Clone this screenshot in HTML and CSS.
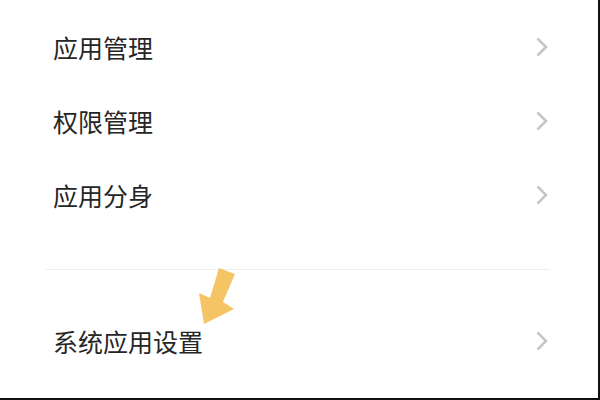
FILE: index.html
```html
<!DOCTYPE html>
<html lang="zh">
<head>
    <meta charset="UTF-8">
    <meta name="viewport" content="width=device-width, initial-scale=1.0">
    <title>应用设置</title>
    <link rel="stylesheet" href="styles.css">
</head>
<body>
    <div class="screen">
        <ul class="menu">
            <li class="menu-item">
                <span>应用管理</span>
                <svg class="chevron" viewBox="0 0 14 22"><path d="M2.5 2.5 L11 11 L2.5 19.5"/></svg>
            </li>
            <li class="menu-item">
                <span>权限管理</span>
                <svg class="chevron" viewBox="0 0 14 22"><path d="M2.5 2.5 L11 11 L2.5 19.5"/></svg>
            </li>
            <li class="menu-item">
                <span>应用分身</span>
                <svg class="chevron" viewBox="0 0 14 22"><path d="M2.5 2.5 L11 11 L2.5 19.5"/></svg>
            </li>
        </ul>

        <div class="divider"></div>

        <ul class="menu menu-system">
            <li class="menu-item">
                <span>系统应用设置</span>
                <svg class="chevron" viewBox="0 0 14 22"><path d="M2.5 2.5 L11 11 L2.5 19.5"/></svg>
            </li>
        </ul>

        <!-- hint arrow -->
        <svg class="hint-arrow" width="600" height="400" viewBox="0 0 600 400">
            <polygon points="219,268 235,274 223,302 234,309 204,324 199,293 210,298"/>
        </svg>
    </div>
</body>
</html>
```

FILE: styles.css
```css
/* General Styles */
body {
    margin: 0;
    padding: 0;
    font-family: "Noto Sans CJK SC", "Noto Sans", sans-serif;
    background-color: #ffffff;
}

/* Screen */
.screen {
    position: relative;
    width: 598px;
    height: 398px;
    overflow: hidden;
    border-right: 2px solid #111111;
    border-bottom: 2px solid #111111;
}

/* Menu */
.menu {
    list-style: none;
    margin: 0;
    padding: 10px 0 0 0;
}

.menu-item {
    display: flex;
    align-items: center;
    justify-content: space-between;
    height: 74px;
    padding: 0 49px 0 53px;
    font-size: 25px;
    color: #262626;
}

.chevron {
    width: 14px;
    height: 22px;
    fill: none;
    stroke: #c6c6c6;
    stroke-width: 2.6;
}

/* Divider */
.divider {
    height: 1px;
    margin: 37px 48px 0 45px;
    background-color: #efefef;
}

.menu-system {
    padding-top: 34px;
}

/* Arrow */
.hint-arrow {
    position: absolute;
    top: 0;
    left: 0;
    fill: #f5c565;
}
```
